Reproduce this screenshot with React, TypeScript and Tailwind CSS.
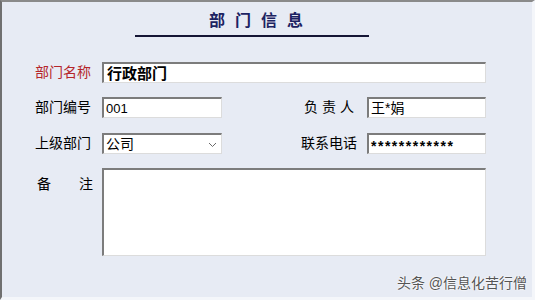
import React from "react";

const font = { fontFamily: '"Liberation Sans", "Noto Sans CJK SC", sans-serif' };

function Sunken({ className, children }: { className: string; children?: React.ReactNode }) {
  return (
    <div
      className={`bg-white border-t-2 border-l-2 border-t-[#7c7c7c] border-l-[#7c7c7c] border-b border-r border-b-[#dcdcdc] border-r-[#dcdcdc] flex items-center ${className}`}
    >
      {children}
    </div>
  );
}

export default function App() {
  return (
    <div
      style={font}
      className="w-[535px] h-[300px] bg-[#e7ebf4] border-t-2 border-l-2 border-t-[#8a8a8a] border-l-[#707070] border-r-[3px] border-b-[3px] border-r-[#f4f6fa] border-b-[#f4f6fa] text-black overflow-hidden flex flex-col relative"
    >
      <div className="ml-[133px] w-[234px] h-[35px] border-b-2 border-[#151535] flex items-end justify-center pb-[4px] pl-[18px]">
        <span className="text-[16px] font-bold text-[#1c2362] tracking-[10px] leading-[20px]">部门信息</span>
      </div>

      <div className="mt-[25px] flex items-center pl-[33px] h-[21px]">
        <div className="w-[67px] text-[14px] text-[#b5262a]">部门名称</div>
        <Sunken className="w-[384px] h-[21px] pl-[3px]">
          <span className="text-[15px] font-bold leading-none">行政部门</span>
        </Sunken>
      </div>

      <div className="mt-[14px] flex items-center pl-[33px] h-[21px]">
        <div className="w-[67px] text-[14px]">部门编号</div>
        <Sunken className="w-[120px] h-[21px] pl-[2px]">
          <span className="text-[13px] leading-none">001</span>
        </Sunken>
        <div className="w-[145px] text-[14px] text-right pr-[9px] tracking-[4px]">负责人</div>
        <Sunken className="w-[119px] h-[21px] pl-[2px]">
          <span className="text-[14px] leading-none">王*娟</span>
        </Sunken>
      </div>

      <div className="mt-[15px] flex items-center pl-[33px] h-[21px]">
        <div className="w-[67px] text-[14px]">上级部门</div>
        <Sunken className="w-[120px] h-[21px] pl-[2px] justify-between pr-[4px]">
          <span className="text-[14px] leading-none">公司</span>
          <svg width="9" height="6" viewBox="0 0 9 6" className="mt-[2px]">
            <path d="M1 1 L4.5 4.5 L8 1" fill="none" stroke="#6a6a6a" strokeWidth="1" />
          </svg>
        </Sunken>
        <div className="w-[145px] text-[14px] text-right pr-[10px]">联系电话</div>
        <Sunken className="w-[119px] h-[21px] pl-[2px]">
          <span className="text-[14px] font-bold leading-none mt-[4px] tracking-[1.5px]">************</span>
        </Sunken>
      </div>

      <div className="mt-[14px] flex items-start pl-[33px]">
        <div className="w-[67px] text-[14px] flex pt-[6px] pr-[9px] justify-between pl-[2px]">
          <span>备</span>
          <span>注</span>
        </div>
        <Sunken className="w-[384px] h-[88px]" />
      </div>

      <div className="absolute right-[5px] bottom-[3px] text-[14px] text-[#555555] [text-shadow:0_0_2px_#fff,0_0_2px_#fff]">
        头条 @信息化苦行僧
      </div>
    </div>
  );
}
